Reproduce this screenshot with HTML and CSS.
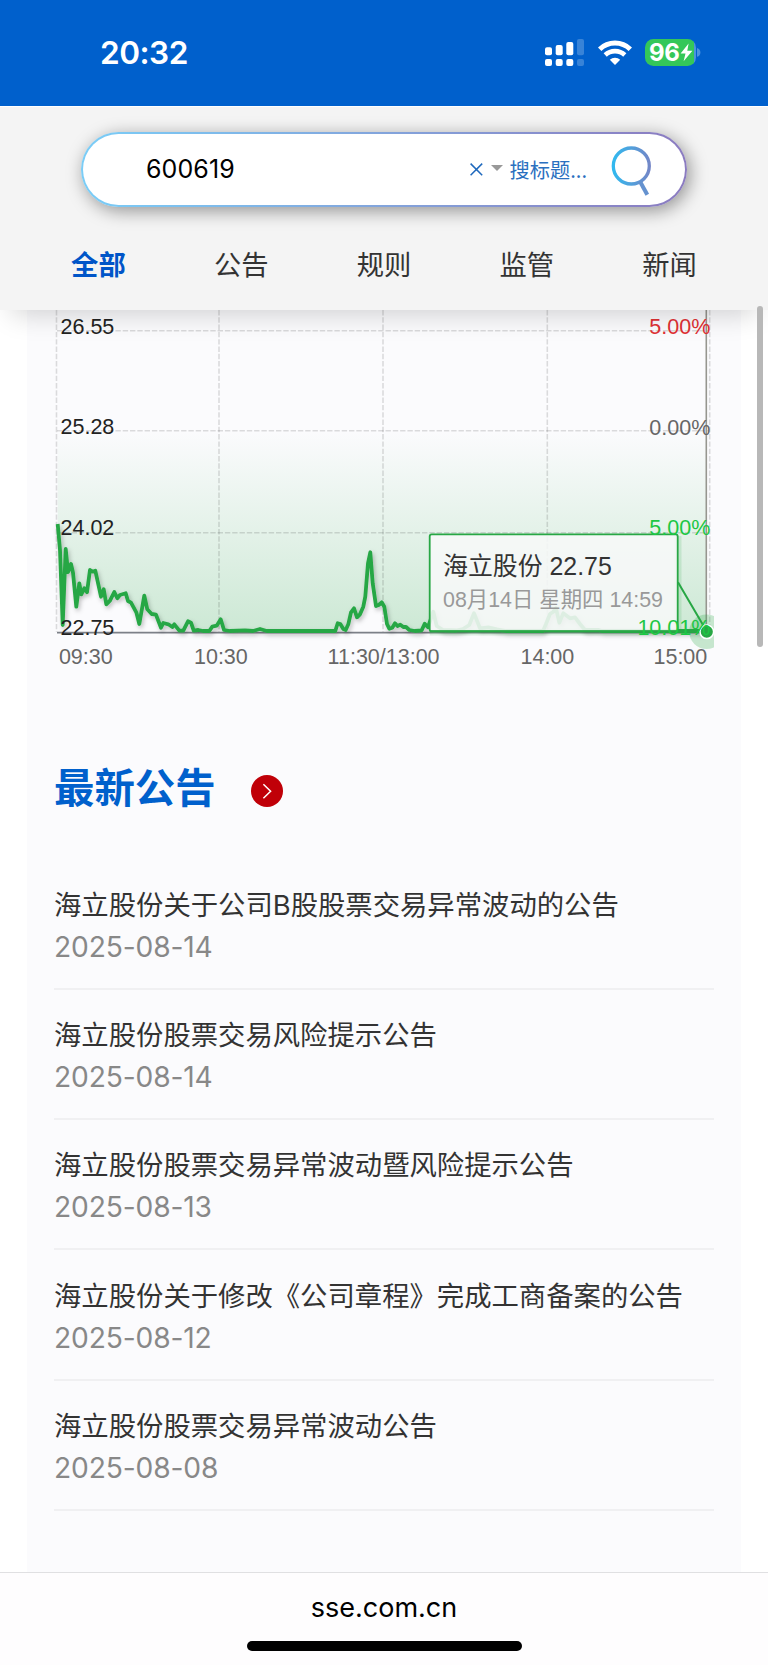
FILE: index.html
```html
<!DOCTYPE html>
<html lang="zh-CN">
  <head>
    <meta charset="UTF-8" />
    <meta name="viewport" content="width=device-width, initial-scale=1.0" />
    <title>600619 - 上海证券交易所</title>
    <link rel="stylesheet" href="styles.css">
  </head>
  <body>
    <div class="status-bar">
      <span class="time">20:32</span>
      <svg class="signal" width="39" height="27" viewBox="0 0 39 27" fill="#fff">
        <rect x="0" y="8.3" width="7" height="8" rx="2" />
        <rect x="10.7" y="6" width="7" height="10.3" rx="2" />
        <rect x="21.3" y="3" width="7" height="13.3" rx="2" />
        <rect x="0" y="20" width="7" height="7" rx="2" />
        <rect x="10.7" y="20" width="7" height="7" rx="2" />
        <rect x="21.3" y="20" width="7" height="7" rx="2" />
        <g opacity="0.22">
          <rect x="32" y="0" width="7" height="16.3" rx="2" />
          <rect x="32" y="20" width="7" height="7" rx="2" />
        </g>
      </svg>
      <svg class="wifi" width="34" height="25" viewBox="0 0 34 25">
        <path d="M1.7 9.2a22 22 0 0 1 30.6 0" fill="none" stroke="#fff" stroke-width="4.9" />
        <path d="M7.2 15a14.2 14.2 0 0 1 19.6 0" fill="none" stroke="#fff" stroke-width="4.6" />
        <path d="M17 25l-5.2-5.2a7.6 7.6 0 0 1 10.4 0z" fill="#fff" />
      </svg>
      <div class="battery">
        <span>96</span>
        <svg width="13" height="19" viewBox="0 0 13 19"><path d="M8.6 0.5L0.6 10.6h4.9L3.6 18.3l8.8-10.5H7.3z" fill="#fff" /></svg>
      </div>
      <svg class="battery-cap" width="4" height="9" viewBox="0 0 4 9"><path d="M0 0q3.4 1.2 3.4 4.4T0 8.8z" fill="#4d92de" /></svg>
    </div>

    <header class="header">
      <div class="search">
        <span class="keyword">600619</span>
        <svg class="clear" width="13" height="13" viewBox="0 0 13 13"><path d="M0.6 0.6l11.6 11.6M12.2 0.6L0.6 12.2" stroke="#1f69bd" stroke-width="1.5" /></svg>
        <span class="caret"></span>
        <span class="scope">搜标题...</span>
        <svg class="search-icon" width="42" height="50" viewBox="0 0 42 50" fill="none">
          <defs>
            <linearGradient id="lens" gradientUnits="userSpaceOnUse" x1="1" y1="0" x2="40" y2="0">
              <stop offset="0" stop-color="#2fbaf0" />
              <stop offset="1" stop-color="#7585c6" />
            </linearGradient>
          </defs>
          <circle cx="20.3" cy="20" r="18" stroke="url(#lens)" stroke-width="3.3" />
          <path d="M29 35.5l7.3 13.2" stroke="#6592cf" stroke-width="4" />
        </svg>
      </div>
      <nav class="tabs">
        <a class="active">全部</a>
        <a>公告</a>
        <a>规则</a>
        <a>监管</a>
        <a>新闻</a>
      </nav>
    </header>

    <main class="card">
      <svg class="chart" width="714" height="380" viewBox="27 310 714 380">
        <defs>
          <linearGradient id="area" gradientUnits="userSpaceOnUse" x1="0" y1="431" x2="0" y2="631">
            <stop offset="0" stop-color="#28a745" stop-opacity="0" />
            <stop offset="1" stop-color="#28a745" stop-opacity="0.22" />
          </linearGradient>
          <filter id="shadow" x="-5%" y="-20%" width="110%" height="140%">
            <feDropShadow dx="1.5" dy="2.5" stdDeviation="2" flood-color="#000" flood-opacity="0.25" />
          </filter>
          <clipPath id="plot"><rect x="27" y="310" width="687" height="380" /></clipPath>
        </defs>

        <path fill="url(#area)" d="M57.7 431V524L60 550L62.7 625L65.7 549L68 572L71 564L73 572.7L76.3 606.7L79.3 583.3L81.3 594.3L84.3 588.3L87 592.3L90 570L92.7 571.7L95.3 570.7L101 596.7L103.7 589.3L106.3 604.3L110 600.7L114.3 592L117.3 598.3L120 595L125.7 593.3L128 601L131 602.7L136.3 612.3L139.3 624L144.3 595.7L147.3 609.3L151.7 614L156 614.7L161 627.7L163.3 623L168.3 624.3L172.3 627L174.3 624.3L179.3 630.7H183.3L188 621.3L191 622.7L193.7 630.7H209.3L212.3 626.7L216.7 625.7L220.7 619.3L224 630L230 631L245 630.3L253 631L260 629L266.7 631H335.3L337.7 623.3L340.3 624L343.3 629L345.7 630L348.3 624.3L351 612.3L354 608.3L357 617.3L360 614.3L363.3 606.7L365.3 596.7L368 563.3L370.3 552.3L372.7 583.3L376 606L378.7 605L381.7 602.3L384.3 606.7L387 624L389.3 628.7L392.3 627.7L395 623.3L397.5 626L400.3 624.7L403.3 627H406L409.3 630L415 631L421.7 630.3L424.7 623.7L428 627.3L433.3 611.7L436.7 626L443 631H706.7V431z" />

        <g class="grid">
          <path d="M56.5 310V632M219 310V632M383 310V632M547.3 310V632M709.7 310V632" />
          <path d="M57 330.7H709M57 430.8H709M57 532.7H709" />
        </g>
        <path d="M706.3 310V632" stroke="#96968f" stroke-width="1.6" />
        <path d="M57 632.6H707" stroke="#7c8088" stroke-width="1.6" />

        <path class="line" filter="url(#shadow)" d="M57.7 524L60 550L62.7 625L65.7 549L68 572L71 564L73 572.7L76.3 606.7L79.3 583.3L81.3 594.3L84.3 588.3L87 592.3L90 570L92.7 571.7L95.3 570.7L101 596.7L103.7 589.3L106.3 604.3L110 600.7L114.3 592L117.3 598.3L120 595L125.7 593.3L128 601L131 602.7L136.3 612.3L139.3 624L144.3 595.7L147.3 609.3L151.7 614L156 614.7L161 627.7L163.3 623L168.3 624.3L172.3 627L174.3 624.3L179.3 630.7H183.3L188 621.3L191 622.7L193.7 630.7L198.3 630L203 631H209.3L212.3 626.7L216.7 625.7L220.7 619.3L224 630L230 631L245 630.3L253 631L260 629L266.7 631H335.3L337.7 623.3L340.3 624L343.3 629L345.7 630L348.3 624.3L351 612.3L354 608.3L357 617.3L360 614.3L363.3 606.7L365.3 596.7L368 563.3L370.3 552.3L372.7 583.3L376 606L378.7 605L381.7 602.3L384.3 606.7L387 624L389.3 628.7L392.3 627.7L395 623.3L397.5 626L400.3 624.7L403.3 627H406L409.3 630L415 631L421.7 630.3L424.7 623.7L428 627.3L433.3 611.7L436.7 626L443 630L456 630.5L463 629L469.3 625L474 613.3L480 628.3L488.3 627.3L497 629.3L506 631H543L546 624L550 614L553.3 611.7L556 608.3L559.3 622.7L563.3 613.3L570 618.3L575 617.3L580 624L585 630L598 629.8L602 631H706.7" />

        <!-- tooltip and its pointer -->
        <g clip-path="url(#plot)">
          <circle cx="706.5" cy="631.7" r="17.3" fill="#28a745" fill-opacity="0.25" />
        </g>
        <path class="tip-glow" d="M429.7 632H678V536" />
        <rect x="429.7" y="534.4" width="248" height="97" rx="2" fill="#f7f8f8" fill-opacity="0.88" stroke="#28a745" stroke-width="1.8" />
        <path d="M430 631.2H706.7L678 582.3" fill="none" stroke="#28a745" stroke-width="2" />
        <circle cx="706.8" cy="631.8" r="6.8" fill="#28a745" stroke="#fff" stroke-width="1.5" />
        <text class="tip-title" x="443" y="575">海立股份 22.75</text>
        <text class="tip-date" x="443" y="606.7">08月14日 星期四 14:59</text>

        <g class="label" fill="#222">
          <text x="60.5" y="334">26.55</text>
          <text x="60.5" y="434">25.28</text>
          <text x="60.5" y="535">24.02</text>
          <text x="60.5" y="635">22.75</text>
        </g>
        <g class="label" text-anchor="end">
          <text x="710.3" y="334" fill="#e03034">5.00%</text>
          <text x="710.3" y="435.3" fill="#666">0.00%</text>
          <text x="710.3" y="535" fill="#1cc744">5.00%</text>
          <text x="710.3" y="635" fill="#1cc744">10.01%</text>
        </g>
        <g class="label" fill="#666">
          <text x="58.9" y="663.7">09:30</text>
          <text x="220.9" y="663.7" text-anchor="middle">10:30</text>
          <text x="383.6" y="663.7" text-anchor="middle">11:30/13:00</text>
          <text x="547.4" y="663.7" text-anchor="middle">14:00</text>
          <text x="707.3" y="663.7" text-anchor="end">15:00</text>
        </g>
      </svg>

      <section class="notices">
        <h2>
          <span>最新公告</span>
          <svg width="32" height="32" viewBox="0 0 32 32"><circle cx="16" cy="16" r="16" fill="#c00008" /><path d="M12.4 9.2l7.2 7-7.2 7" fill="none" stroke="#fff" stroke-width="1.5" /></svg>
        </h2>
        <ul>
          <li>
            <a>海立股份关于公司B股股票交易异常波动的公告</a>
            <time>2025-08-14</time>
          </li>
          <li>
            <a>海立股份股票交易风险提示公告</a>
            <time>2025-08-14</time>
          </li>
          <li>
            <a>海立股份股票交易异常波动暨风险提示公告</a>
            <time>2025-08-13</time>
          </li>
          <li>
            <a>海立股份关于修改《公司章程》完成工商备案的公告</a>
            <time>2025-08-12</time>
          </li>
          <li>
            <a>海立股份股票交易异常波动公告</a>
            <time>2025-08-08</time>
          </li>
        </ul>
      </section>
    </main>

    <footer class="browser-bar">
      <span>sse.com.cn</span>
      <div class="home-indicator"></div>
    </footer>
    <div class="scrollbar"></div>
  </body>
</html>
```
FILE: styles.css
```css
* {
  box-sizing: border-box;
}
body {
  margin: 0;
  height: 1665px;
  display: flex;
  flex-direction: column;
  position: relative;
  overflow: hidden;
  background: #fff;
  color: #333;
  font-family: Inter, "Noto Sans CJK SC", sans-serif;
}

/* status bar */
.status-bar {
  flex: none;
  height: 106px;
  padding: 0 67px 2px 100px;
  display: flex;
  align-items: center;
  background: #0060cc;
  color: #fff;
}
.time {
  padding-top: 1px;
  font-size: 31.6px;
  font-weight: 600;
  letter-spacing: -0.5px;
}
.signal {
  margin-left: auto;
}
.wifi {
  margin: 0 13.5px 0 13.5px;
}
.battery {
  width: 50.5px;
  height: 27px;
  padding-left: 4px;
  border-radius: 8.5px;
  display: flex;
  align-items: center;
  background: linear-gradient(90deg, #34c759 49px, #4d92de 49px);
  font-size: 24px;
  font-weight: 700;
  letter-spacing: -0.4px;
}
.battery svg {
  margin-left: 1px;
}
.battery-cap {
  margin-left: 1.5px;
}

/* search and tabs */
.header {
  flex: none;
  height: 204px;
  padding-top: 25px;
  border-top: 1px solid #fff;
  position: relative;
  z-index: 1;
  background: #f4f4f4;
  box-shadow: 0 16px 26px -12px rgba(0, 0, 0, 0.18);
}
.search {
  width: 606px;
  height: 75px;
  margin: 0 auto;
  padding: 0 32px 0 63px;
  display: flex;
  align-items: center;
  border: 2px solid transparent;
  border-radius: 38px;
  background: linear-gradient(#fff, #fff) padding-box,
    linear-gradient(90deg, #7acdf7, #8b7bc0) border-box;
  box-shadow: 3px 4px 18px rgba(0, 0, 0, 0.4);
}
.keyword {
  padding-bottom: 2px;
  font-size: 25px;
  letter-spacing: 0.1px;
  color: #000;
}
.clear {
  margin-left: auto;
}
.caret {
  margin: 0 7px 3px 8px;
  border: 6px solid transparent;
  border-top-color: #999;
  border-bottom: 0;
}
.scope {
  font-family: "Noto Sans CJK SC", sans-serif;
  font-size: 20.2px;
  color: #2a70bf;
}
.search-icon {
  margin: 3px 0 0 24px;
}
.tabs {
  margin: 11px 27px 0;
  height: 90px;
  display: grid;
  grid-template-columns: repeat(5, 1fr);
  align-items: center;
  text-align: center;
  font-size: 27.3px;
}
.tabs .active {
  color: #0055c8;
  font-weight: bold;
}

/* quote chart */
.card {
  flex: 1;
  min-height: 0;
  margin: 0 27px;
  background: #fbfbfd;
}
.chart {
  display: block;
  font-family: "Liberation Sans", "Noto Sans CJK SC", sans-serif;
}
.grid {
  stroke: #000;
  stroke-opacity: 0.13;
  stroke-width: 1.6;
  stroke-dasharray: 5.4 1.9;
}
.line {
  fill: none;
  stroke: #28a745;
  stroke-width: 3.8;
  stroke-linejoin: round;
}
.tip-glow {
  fill: none;
  stroke: #28a745;
  stroke-opacity: 0.15;
  stroke-width: 7;
}
.label {
  font-size: 21.5px;
}
.tip-title {
  font-size: 24.9px;
  fill: #333;
}
.tip-date {
  font-size: 21.4px;
  fill: #999;
}

/* notices */
.notices {
  padding: 70px 27px 0;
}
.notices h2 {
  height: 60px;
  margin: 0 0 39.3px;
  display: flex;
  align-items: center;
  gap: 35px;
  font-size: 40.4px;
  line-height: 60px;
  color: #0060cc;
}
.notices h2 span {
  padding-bottom: 3px;
}
.notices h2 svg {
  margin-top: 2px;
}
.notices ul {
  margin: 0;
  padding: 0;
  list-style: none;
}
.notices li {
  height: 130.4px;
  padding-top: 25.4px;
  border-bottom: 2px solid #f0f0f2;
}
.notices a,
.notices time {
  display: block;
  line-height: 42px;
  white-space: nowrap;
}
.notices a {
  font-size: 27.35px;
}
.notices time {
  font-size: 28.2px;
  line-height: 41px;
  letter-spacing: -0.15px;
  color: #888;
}

/* browser bar */
.browser-bar {
  flex: none;
  height: 93px;
  padding-top: 17.5px;
  display: flex;
  flex-direction: column;
  align-items: center;
  border-top: 1.5px solid #e0e0e2;
  background: #fefdfe;
  color: #000;
  font-size: 27px;
  line-height: 34px;
}
.home-indicator {
  width: 275px;
  height: 10px;
  margin-top: 16px;
  border-radius: 5px;
  background: #000;
}
.scrollbar {
  position: absolute;
  z-index: 2;
  top: 306px;
  right: 5.5px;
  width: 5.5px;
  height: 341px;
  border-radius: 3px;
  background: #b8b8b8;
}
```
